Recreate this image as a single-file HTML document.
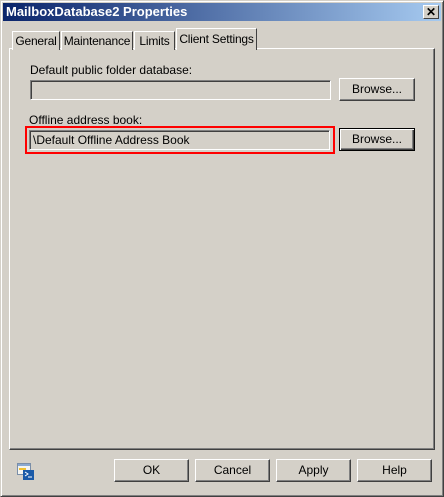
<!DOCTYPE html>
<html><head><style>
*{margin:0;padding:0;box-sizing:border-box}
body{width:444px;height:497px;background:#d4d0c8;font-family:"Liberation Sans",sans-serif;font-size:12px;color:#000;position:relative;overflow:hidden}
.a{position:absolute;white-space:nowrap}
.win{left:0;top:0;width:444px;height:497px;border:1px solid;border-color:#d4d0c8 #404040 #404040 #d4d0c8;box-shadow:inset 1px 1px 0 #fff,inset -1px -1px 0 #808080}
.title{left:3px;top:3px;width:438px;height:18px;background:linear-gradient(90deg,#0a246a,#a6caf0);color:#fff;font-weight:bold;font-size:13px;line-height:18px;padding-left:3px}
.close{left:423px;top:5px;width:16px;height:14px;background:#d4d0c8;border:1px solid;border-color:#fff #404040 #404040 #fff;font-size:12px;line-height:12px;text-align:center;font-weight:bold}
.tab{height:19px;border:1px solid;border-color:#fff #404040 transparent #fff;border-bottom:none;line-height:18px;background:#d4d0c8;text-align:center;font-size:12px;letter-spacing:-0.2px}
.panel{left:9px;top:48px;width:426px;height:402px;border:1px solid;border-color:#fff #404040 #404040 #fff;box-shadow:inset -1px -1px 0 #808080}
.field{height:20px;border:1px solid;border-color:#808080 #fff #fff #808080;box-shadow:inset 1px 1px 0 #404040;background:#d4d0c8;padding-left:3px;line-height:18px;font-size:12px}
.btn{height:23px;border:1px solid;border-color:#fff #404040 #404040 #fff;box-shadow:inset -1px -1px 0 #808080;text-align:center;line-height:21px;font-size:12px;background:#d4d0c8}
</style></head><body>
<div class="a win"></div>
<div class="a title">MailboxDatabase2 Properties</div>
<div class="a close">✕</div>
<div class="a panel"></div>
<div class="a tab" style="left:12px;top:31px;width:48px">General</div>
<div class="a tab" style="left:61px;top:31px;width:72px">Maintenance</div>
<div class="a tab" style="left:134px;top:31px;width:41px">Limits</div>
<div class="a tab" style="left:176px;top:28px;width:81px;height:22px;line-height:20px">Client Settings</div>
<div class="a" style="left:30px;top:63px">Default public folder database:</div>
<div class="a field" style="left:30px;top:80px;width:301px"></div>
<div class="a btn" style="left:339px;top:78px;width:76px">Browse...</div>
<div class="a" style="left:29px;top:113px">Offline address book:</div>
<div class="a" style="left:25px;top:126px;width:310px;height:28px;border:2px solid #f00"></div>
<div class="a field" style="left:29px;top:130px;width:301px">\Default Offline Address Book</div>
<div class="a btn" style="left:339px;top:128px;width:76px;border:1px solid #000;box-shadow:inset 1px 1px 0 #fff,inset -1px -1px 0 #404040,inset -2px -2px 0 #808080">Browse...</div>
<svg class="a" style="left:17px;top:463px" width="17" height="17" viewBox="0 0 17 17">
<rect x="0.5" y="0.5" width="13" height="11" fill="#f4f4f0" stroke="#7a8ea8"/>
<rect x="1" y="1" width="12" height="2" fill="#8aa8d0"/>
<rect x="2" y="5" width="7" height="2" fill="#f0c030"/>
<rect x="6" y="7" width="11" height="10" fill="#1a5aa8"/>
<path d="M8 9l3 2-3 2M11 14h4" stroke="#fff" fill="none"/>
</svg>
<div class="a btn" style="left:114px;top:459px;width:75px">OK</div>
<div class="a btn" style="left:195px;top:459px;width:75px">Cancel</div>
<div class="a btn" style="left:276px;top:459px;width:75px">Apply</div>
<div class="a btn" style="left:357px;top:459px;width:75px">Help</div>
</body></html>
